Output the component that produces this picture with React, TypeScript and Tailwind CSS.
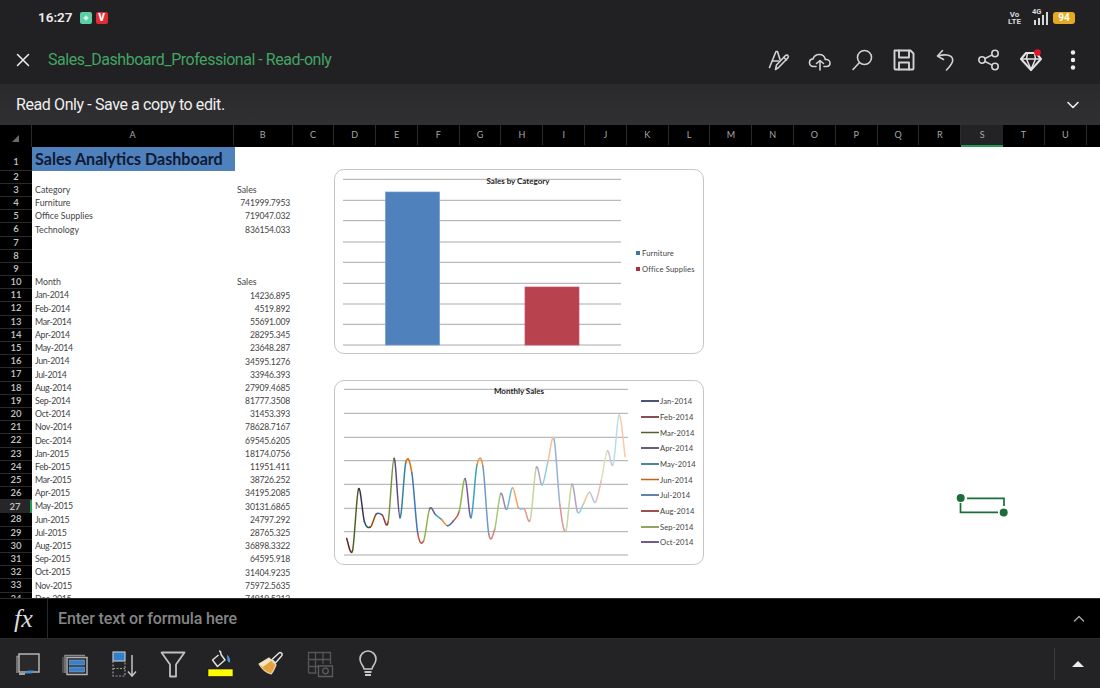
import React from "react";

const columns = ["C","D","E","F","G","H","I","J","K","L","M","N","O","P","Q","R","S","T","U",""];

const rows: [string, string][] = [
  ["", ""],
  ["Category", "Sales"],
  ["Furniture", "741999.7953"],
  ["Office Supplies", "719047.032"],
  ["Technology", "836154.033"],
  ["", ""],
  ["", ""],
  ["", ""],
  ["Month", "Sales"],
  ["Jan-2014", "14236.895"],
  ["Feb-2014", "4519.892"],
  ["Mar-2014", "55691.009"],
  ["Apr-2014", "28295.345"],
  ["May-2014", "23648.287"],
  ["Jun-2014", "34595.1276"],
  ["Jul-2014", "33946.393"],
  ["Aug-2014", "27909.4685"],
  ["Sep-2014", "81777.3508"],
  ["Oct-2014", "31453.393"],
  ["Nov-2014", "78628.7167"],
  ["Dec-2014", "69545.6205"],
  ["Jan-2015", "18174.0756"],
  ["Feb-2015", "11951.411"],
  ["Mar-2015", "38726.252"],
  ["Apr-2015", "34195.2085"],
  ["May-2015", "30131.6865"],
  ["Jun-2015", "24797.292"],
  ["Jul-2015", "28765.325"],
  ["Aug-2015", "36898.3322"],
  ["Sep-2015", "64595.918"],
  ["Oct-2015", "31404.9235"],
  ["Nov-2015", "75972.5635"],
  ["Dec-2015", "74919.5212"],
];

const ys = [490,526,342,440,456,417,420,441,250,428,261,293,475,497,402,419,433,452,438,409,311,428,270,274,478,462,356,403,338,398,402,434,278,330,258,192,390,468,328,412,385,352,382,315,228,268,120,245];
const palette = [
  ["#1f3460","#632523","#4F6228","#403152","#215968","#984807"],
  ["#376092","#953735","#77933C","#604A7B","#31859C","#E46C0A"],
  ["#3f74b5","#C0504D","#8fb44a","#75559c","#3aa3bf","#ee8a35"],
  ["#3f74b5","#C0504D","#8fb44a","#75559c","#3aa3bf","#ee8a35"],
  ["#6f98cb","#cf7b79","#a9c676","#9783b6","#6bb9cf","#f8a55f"],
  ["#95B3D7","#D99694","#C3D69B","#B3A2C7","#93CDDD","#FAC090"],
  ["#95B3D7","#D99694","#C3D69B","#B3A2C7","#93CDDD","#FAC090"],
  ["#B0C7E2","#E6B9B8","#D7E4BD","#CCC1DA","#B7DEE8","#FCC8A5"],
];
const px = (i: number) => 62 + i * 17.77;
const segments = ys.slice(1).map((_, k) => {
  const p = (i: number) => {
    const c = Math.max(0, Math.min(ys.length - 1, i));
    return [px(c) / 3, ys[c] / 3];
  };
  const [a, b, c, d] = [p(k - 1), p(k), p(k + 1), p(k + 2)];
  const t = 6;
  const c1 = [b[0] + (c[0] - a[0]) / t, b[1] + (c[1] - a[1]) / t];
  const c2 = [c[0] - (d[0] - b[0]) / t, c[1] - (d[1] - b[1]) / t];
  const i = k + 1;
  const color = palette[Math.floor(i / 6)][i % 6];
  return { d: `M${b[0]} ${b[1]}C${c1[0]} ${c1[1]} ${c2[0]} ${c2[1]} ${c[0]} ${c[1]}`, color };
});

const lineLegend: [string, string, number][] = [
  ["Jan-2014", "#14184f", 26],
  ["Feb-2014", "#5c1518", 42],
  ["Mar-2014", "#4F6228", 57.500],
  ["Apr-2014", "#362552", 73],
  ["May-2014", "#11606e", 89],
  ["Jun-2014", "#b8661e", 104.500],
  ["Jul-2014", "#2c5a8e", 120],
  ["Aug-2014", "#7c1518", 136],
  ["Sep-2014", "#6b8a2c", 152],
  ["Oct-2014", "#43276f", 167],
];

function BarChart() {
  const grid = [9.3, 30.3, 50.7, 72, 92.3, 113.3, 134, 154.3, 175];
  return (
    <div className="absolute left-[334px] top-[22px] w-[370px] h-[185px] rounded-[10px] border border-[#c6c6c6] bg-white overflow-hidden">
      <svg width="370" height="185" className="block font-['Lato'] -m-px">
        {grid.map((y) => (
          <line key={y} x1="9" x2="287" y1={y + 1} y2={y + 1} stroke="#a9a9a9" strokeWidth="1" />
        ))}
        <rect x="51.5" y="23" width="54" height="153" fill="#4f81bd" stroke="#6f9ad0" strokeWidth="0.7" />
        <rect x="191" y="118" width="54" height="58" fill="#b8434f" stroke="#c9505c" strokeWidth="0.7" />
        <text x="184" y="15" textAnchor="middle" fontSize="8" fontWeight="700" fill="#222">Sales by Category</text>
        <rect x="302" y="82" width="4" height="4" fill="#3f73ad" />
        <text x="308" y="87" fontSize="7.6" fill="#444" letterSpacing="0.15">Furniture</text>
        <rect x="302" y="98" width="4" height="4" fill="#b02c3f" />
        <text x="308" y="102.5" fontSize="7.6" fill="#444" letterSpacing="0.15">Office Supplies</text>
      </svg>
    </div>
  );
}

function LineChart() {
  const grid = [14.3, 38.3, 62.3, 85.7, 109.3, 133.3, 156.7, 180];
  return (
    <div className="absolute left-[334px] top-[233px] w-[370px] h-[185px] rounded-[10px] border border-[#c6c6c6] bg-white overflow-hidden">
      <svg width="370" height="185" viewBox="9 5 370 185" className="block font-['Lato'] -mt-px">
        {grid.map((y) => (
          <line key={y} x1="18" x2="302" y1={y} y2={y} stroke="#a9a9a9" strokeWidth="1" />
        ))}
        {segments.map((s, i) => (
          <path key={i} d={s.d} fill="none" stroke={s.color} strokeWidth="1.5" strokeLinecap="round" />
        ))}
        <text x="193" y="19" textAnchor="middle" fontSize="8" fontWeight="700" fill="#222">Monthly Sales</text>
        {lineLegend.map(([label, color, y]) => (
          <g key={label}>
            <line x1="315" x2="333" y1={y} y2={y} stroke={color} strokeWidth="1.5" />
            <text x="334" y={y + 3} fontSize="7.6" fill="#444" letterSpacing="0.1">{label}</text>
          </g>
        ))}
      </svg>
    </div>
  );
}

const ic = { fill: "none", stroke: "#d2d2d2", strokeWidth: 1.6, strokeLinecap: "round", strokeLinejoin: "round" } as const;

function TopIcons() {
  return (
    <div className="flex items-center gap-[18.200px] mr-[15px]">
      <svg width="24" height="24" viewBox="0 0 24 24" {...ic}>
        <path d="M3.500 19.500 10 3.500h1.500l2.500 8" /><path d="M6.500 13h6" /><path d="M9.500 21.500l1-4.500 9-9.500c1-.8 2.200-.2 2.500.2.400.5.500 1.500-.2 2.300l-9 9.300z" /><path d="M18 9.500l2.500 2.500" />
      </svg>
      <svg width="24" height="24" viewBox="0 0 24 24" {...ic}>
        <path d="M8 18.500H5.500c-2.500 0-4-1.800-4-3.800 0-2 1.500-3.600 3.500-3.800C6 8 8.500 6.500 11.200 6.500c3.300 0 5.600 2.200 6.100 5h1c2 0 3.700 1.500 3.700 3.500s-1.600 3.500-3.700 3.500H16" /><path d="M12 22v-9" /><path d="M8.500 15.500 12 12.500l3.500 3" />
      </svg>
      <svg width="24" height="24" viewBox="0 0 24 24" {...ic}>
        <circle cx="14.500" cy="9.500" r="7" /><path d="M9.500 14.500 3 21.500" />
      </svg>
      <svg width="24" height="24" viewBox="0 0 24 24" {...ic} strokeWidth="1.900">
        <path d="M2.500 2.500h16l3 3v15a1 1 0 0 1-1 1H3.500a1 1 0 0 1-1-1z" /><path d="M7 2.500v7h10v-7" /><path d="M7 21.500v-7h10v7" />
      </svg>
      <svg width="24" height="24" viewBox="0 0 24 24" {...ic}>
        <path d="M8.500 2.500 3.500 8l6 3.500" /><path d="M4 8c6-2 13-1.500 14.500 2.500 1.200 3.500-2 7.500-6 11.500" />
      </svg>
      <svg width="24" height="24" viewBox="0 0 24 24" {...ic}>
        <circle cx="18" cy="5.500" r="3.200" /><circle cx="5" cy="12" r="3.200" /><circle cx="18" cy="18.500" r="3.200" /><path d="M8 10.500l7.200-3.600M8 13.500l7.200 3.600" />
      </svg>
      <svg width="24" height="24" viewBox="0 0 24 24">
        <path d="M7 5h10l5 6-10 11L2 11z" fill="none" stroke="#e4e4e4" strokeWidth="2" strokeLinejoin="round" />
        <path d="M2.500 11h19M8.500 5 7.500 11l4.500 10.500L16.500 11l-1-6" fill="none" stroke="#e4e4e4" strokeWidth="1.500" />
        <circle cx="18.500" cy="4.500" r="3.300" fill="#e3132c" />
      </svg>
      <svg width="24" height="24" viewBox="0 0 24 24" fill="#ececec">
        <circle cx="12" cy="4.500" r="2.200" /><circle cx="12" cy="12" r="2.200" /><circle cx="12" cy="19.500" r="2.200" />
      </svg>
    </div>
  );
}

function BottomIcons() {
  const s = { fill: "none", stroke: "#a8a8a8", strokeWidth: 1.5 } as const;
  return (
    <div className="flex items-center gap-[18.300px] pl-[12px]">
      <svg width="30" height="30" viewBox="0 0 30 30">
        <path d="M5 24V7.500h20" {...s} stroke="#8a8a8a" />
        <rect x="7" y="5" width="20" height="18" fill="#2a2a2c" stroke="#b5b5b5" strokeWidth="1.500" />
        <path d="M13 24.500l3-3h6l-2.500 3z" fill="#3f8bdc" />
        <path d="M7 25h6" stroke="#cfcfcf" strokeWidth="1.500" />
      </svg>
      <svg width="30" height="30" viewBox="0 0 30 30">
        <path d="M5 24V6.500h20" {...s} stroke="#8a8a8a" />
        <path d="M3 24V8" {...s} stroke="#777" strokeWidth="1" />
        <rect x="7" y="8.500" width="20" height="17" fill="#2a2a2c" stroke="#b0b0b0" strokeWidth="1.500" />
        <rect x="9.500" y="11" width="15" height="5" fill="#3d7fc4" stroke="#8ab8e8" strokeWidth="0.500" />
        <rect x="9.500" y="18" width="15" height="5" fill="#3d7fc4" stroke="#8ab8e8" strokeWidth="0.500" />
      </svg>
      <svg width="30" height="30" viewBox="0 0 30 30">
        <rect x="4" y="3" width="12" height="9" fill="#2f7fd0" stroke="#c2c2c2" strokeWidth="1.200" />
        <path d="M4 12v15h12V12M4 19.500h12" fill="none" stroke="#9a9a9a" strokeWidth="1.200" strokeDasharray="2 1.500" />
        <path d="M23 6v21M19 22.500l4 4.500 4-4.500" fill="none" stroke="#c2c2c2" strokeWidth="1.500" />
      </svg>
      <svg width="30" height="30" viewBox="0 0 30 30">
        <path d="M4.500 3.500h23L19 15.500v12h-6v-12z" fill="none" stroke="#c0c0c0" strokeWidth="1.800" strokeLinejoin="round" />
      </svg>
      <svg width="30" height="30" viewBox="0 0 30 30">
        <path d="M14 2c1.500 0 2 2 2 3.500l4 5.500-7.500 6.500-5-6.500 6-5" fill="none" stroke="#e0e0e0" strokeWidth="1.500" strokeLinejoin="round" />
        <path d="M22 6c2.500 1 3.500 5 3 7.500-1.500 0-2.500-1-2.500-2.500z" fill="#4d9be0" />
        <rect x="3" y="20" width="25" height="7.500" fill="#ffff00" stroke="#111" strokeWidth="0.600" />
      </svg>
      <svg width="30" height="30" viewBox="0 0 30 30" className="ml-[2px]">
        <path d="M4 15l10-6 7 7c-2 5-3 7-5 9-4-1-9-5-12-10z" fill="#e6a13f" stroke="#e4d7b2" strokeWidth="1.200" strokeLinejoin="round" />
        <path d="M4 15l10-6 2.500 2.500-8.500 6.500z" fill="#f2e5bf" />
        <path d="M17 10.500l7-6.500c1-.8 2.500-.3 3 .7.400 1 0 2-.7 2.600L20.500 14z" fill="none" stroke="#e4e4e4" strokeWidth="1.500" />
      </svg>
      <svg width="30" height="30" viewBox="0 0 30 30" className="ml-[1px]">
        <path d="M3.500 24V3.500h22V15M3.500 10.500h22M3.500 17.500h11M10.500 3.500V24M18 3.500V15M3.500 24h8" fill="none" stroke="#565656" strokeWidth="1.300" />
        <path d="M13.500 17h14v10.500h-14z" fill="#242326" stroke="#5c5c5c" strokeWidth="1.300" />
        <circle cx="20.500" cy="22" r="2.800" fill="none" stroke="#5c5c5c" strokeWidth="1.300" />
      </svg>
      <svg width="30" height="30" viewBox="0 0 30 30">
        <path d="M11 20c0-3-4-4.500-4-10a8 8 0 0 1 16 0c0 5.500-4 7-4 10z" fill="none" stroke="#c6c6c6" strokeWidth="1.600" strokeLinejoin="round" />
        <path d="M11.500 23h7M12 26h6" stroke="#c6c6c6" strokeWidth="2" />
      </svg>
    </div>
  );
}

export default function App() {
  return (
    <div className="w-[1100px] h-[688px] flex flex-col overflow-hidden bg-black font-['Roboto',sans-serif]">
      <header className="h-[84px] shrink-0 bg-[#212023] flex flex-col">
        <div className="h-[36px] flex items-center pl-[38px] pr-[25px]">
          <span className="text-[13.500px] font-semibold text-[#ececec] leading-none">16:27</span>
          <span className="ml-[7px] w-[12px] h-[12px] rounded-[2px] bg-[#5fcda5] flex items-center justify-center">
            <span className="w-[4px] h-[4px] rotate-45 bg-[#c9f2e2]" />
          </span>
          <span className="ml-[4px] w-[12px] h-[12px] rounded-[2px] bg-[#e22b33] flex items-center justify-center text-white text-[10px] font-black leading-none">V</span>
          <div className="ml-auto flex items-center">
            <span className="flex flex-col items-center text-[8px] leading-[7px] font-bold text-[#d8d8d8]">
              <span>Vo</span>
              <span>LTE</span>
            </span>
            <span className="relative ml-[10px] w-[20px] h-[14px]">
              <span className="absolute left-[1px] -top-[3px] text-[7.500px] font-bold text-[#d8d8d8] leading-none">4G</span>
              <svg width="20" height="14" viewBox="0 0 20 14" className="block" fill="#d8d8d8">
                <rect x="3" y="9" width="2" height="5" /><rect x="7" y="7" width="2" height="7" /><rect x="11" y="4" width="2" height="10" /><rect x="15" y="1" width="2" height="13" />
              </svg>
            </span>
            <span className="ml-[2px] w-[22px] h-[12px] rounded-[3px] bg-[#e6a821] flex items-center justify-center text-[10px] font-bold text-white leading-none">94</span>
          </div>
        </div>
        <div className="flex-1 flex items-center">
          <svg width="14" height="14" viewBox="0 0 14 14" className="ml-[16px]" stroke="#efefef" strokeWidth="1.500" strokeLinecap="round">
            <path d="M1.500 1.500l11 11M12.500 1.500l-11 11" />
          </svg>
          <span className="ml-[18px] text-[16px] text-[#41a564] tracking-[-0.470px] whitespace-nowrap">Sales_Dashboard_Professional - Read-only</span>
          <div className="ml-auto"><TopIcons /></div>
        </div>
      </header>

      <div className="h-[41px] shrink-0 bg-gradient-to-b from-[#2a292c] to-[#302f32] flex items-center pl-[16px] pr-[20px]">
        <span className="text-[16px] text-[#efefef] tracking-[-0.400px]">Read Only - Save a copy to edit.</span>
        <svg width="14" height="10" viewBox="0 0 14 10" className="ml-auto" fill="none" stroke="#efefef" strokeWidth="1.600" strokeLinecap="round" strokeLinejoin="round">
          <path d="M2 2.500l5 5 5-5" />
        </svg>
      </div>

      <div className="h-[22px] shrink-0 bg-black flex text-[9px] text-[#a8a8a8] font-['Lato',sans-serif]">
        <div className="w-[32px] shrink-0 flex items-end justify-center pb-[5px] border-r border-[#2b2b2b]">
          <span className="w-0 h-0 border-l-[7px] border-l-transparent border-b-[7px] border-b-[#6b6b6b]" />
        </div>
        <div className="w-[202px] shrink-0 flex items-center justify-center border-r border-[#2b2b2b] mb-[2px]">A</div>
        <div className="w-[58.500px] shrink-0 flex items-center justify-center border-r border-[#2b2b2b] mb-[2px]">B</div>
        {columns.map((c, i) =>
          c === "S" ? (
            <div key={i} className="w-[41.800px] shrink-0 flex items-center justify-center bg-[#232325] border-b-2 border-[#1f9a4e]">{c}</div>
          ) : (
            <div key={i} className="w-[41.800px] shrink-0 flex items-center justify-center border-r border-[#2b2b2b] mb-[2px]">{c}</div>
          )
        )}
      </div>

      <main className="relative h-[451px] shrink-0 bg-white overflow-hidden font-['Lato',sans-serif]">
        <div className="flex h-[23.600px]">
          <div className="w-[32px] shrink-0 bg-black text-[#c4c4c4] text-[9.500px] font-semibold flex items-end justify-center border-b border-[#2b2b2b]">1</div>
          <div className="w-[203px] shrink-0 bg-[#4f81bd] pl-[3px] text-[16.100px] font-bold text-[#101a33] leading-[23px] whitespace-nowrap">Sales Analytics Dashboard</div>
        </div>
        {rows.map(([a, b], i) => {
          const n = i + 2;
          const dated = /\d/.test(a);
          return (
            <div key={n} className="flex h-[13.200px] items-center">
              {n === 27 ? (
                <div className="w-[32px] h-full shrink-0 bg-[#262628] border-r-2 border-[#1f9a4e] text-[#c4c4c4] text-[9.500px] font-semibold flex items-center justify-center">{n}</div>
              ) : (
                <div className="w-[32px] h-full shrink-0 bg-black border-b border-[#2b2b2b] text-[#c4c4c4] text-[9.500px] font-semibold flex items-center justify-center">{n}</div>
              )}
              {dated ? (
                <div className="w-[202px] shrink-0 pl-[3px] text-[8.800px] tracking-[-0.350px] text-[#444] whitespace-nowrap leading-none">{a}</div>
              ) : (
                <div className="w-[202px] shrink-0 pl-[3px] text-[8.800px] text-[#444] whitespace-nowrap leading-none">{a}</div>
              )}
              {b === "Sales" ? (
                <div className="w-[56px] shrink-0 pl-[3px] text-[8.800px] text-[#444] whitespace-nowrap leading-none">{b}</div>
              ) : (
                <div className="w-[56px] shrink-0 text-right text-[8.600px] tracking-[-0.200px] text-[#444] whitespace-nowrap leading-none">{b}</div>
              )}
            </div>
          );
        })}
        <BarChart />
        <LineChart />
        <div className="absolute left-[955px] top-[346px] w-[54px] h-[24px]">
          <svg width="54" height="24" viewBox="0 0 54 24" className="block">
            <path d="M12 5.300H49V13M5.500 10V19.300H43" fill="none" stroke="#1a6e37" strokeWidth="1.700" />
            <circle cx="5.700" cy="5" r="4" fill="#1a6e37" />
            <circle cx="48.700" cy="19.500" r="4" fill="#1a6e37" />
          </svg>
        </div>
      </main>

      <div className="h-[41px] shrink-0 bg-black flex items-center border-y border-[#2c2c2e]">
        <div className="w-[48px] h-full shrink-0 flex items-center justify-center border-r border-[#2a2a2a] font-['Liberation_Serif',serif] italic text-[26px] text-[#dcdcdc]">fx</div>
        <span className="ml-[10px] text-[16px] font-medium tracking-[-0.150px] text-[#858585]">Enter text or formula here</span>
        <svg width="12" height="8" viewBox="0 0 12 8" className="ml-auto mr-[15px]" fill="none" stroke="#a8a8a8" strokeWidth="1.400" strokeLinecap="round" strokeLinejoin="round">
          <path d="M1.500 6 6 1.500 10.500 6" />
        </svg>
      </div>

      <footer className="flex-1 bg-[#232224] flex items-center">
        <BottomIcons />
        <div className="ml-auto h-full flex items-center">
          <div className="h-[32px] border-l border-[#3a3a3a]" />
          <span className="ml-[17px] mr-[16px] w-0 h-0 border-l-[6px] border-r-[6px] border-b-[6px] border-l-transparent border-r-transparent border-b-[#eeeeee]" />
        </div>
      </footer>
    </div>
  );
}
